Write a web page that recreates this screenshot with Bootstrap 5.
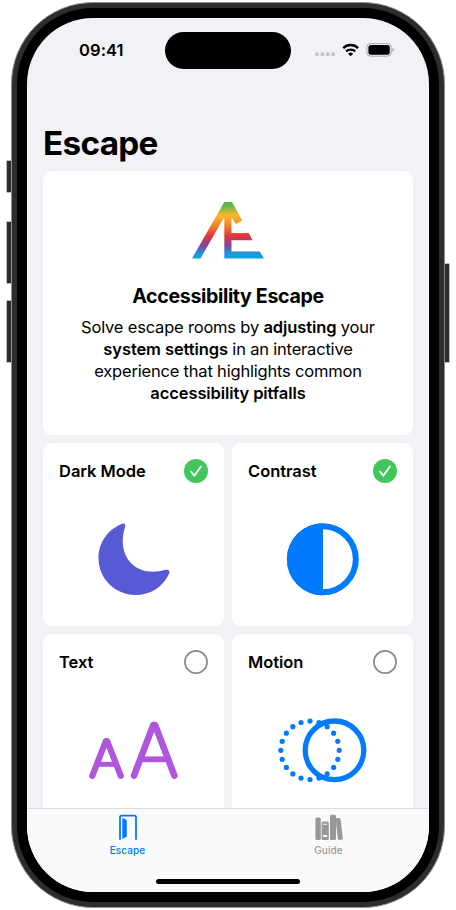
<!DOCTYPE html>
<html lang="en">
<head>
<meta charset="utf-8">
<meta name="viewport" content="width=device-width, initial-scale=1">
<title>Escape</title>
<link href="https://cdn.jsdelivr.net/npm/bootstrap@5.3.0/dist/css/bootstrap.min.css" rel="stylesheet">
<style>
body{font-family:Inter,"Liberation Sans",sans-serif;color:#000;background:#fff;width:456px;height:910px;overflow:hidden;-webkit-font-smoothing:antialiased}
.side-rail{width:11px;flex:none}
.side-key{width:4px;background:#2d2d2d;box-shadow:0 0 0 .5px #777}
.key-action{height:31px;margin-top:161px}
.key-up{height:61px;margin-top:30px}
.key-down{height:61px;margin-top:18px}
.key-power{height:98px;margin-top:264px}
.phone{width:434px;height:906px;margin-top:2px;flex:none;border:1px solid #909090;border-radius:82px;background:#2d2d2d;padding:5px}
.bezel{border-radius:76px;background:#000;padding:10px}
.screen{background:#f2f1f6;border-radius:66px;width:402px;height:874px}
.status{height:66px;padding:14px 0 0 0}
.clock{font-size:16.5px;font-weight:600;letter-spacing:.1px;width:138px;padding-left:52px;line-height:36px}
.island{width:126px;height:37px;flex:none}
.big-title{font-size:33.3px;font-weight:700;letter-spacing:-.7px;line-height:40px;margin:39px 0 8px}
.tile{border:0;border-radius:9px}
.hero{height:264px;padding-top:30px}
.hero h2{font-size:19.6px;font-weight:700;line-height:25px;letter-spacing:-.35px;margin:25px 0 7px}
.hero p{font-size:16.5px;line-height:22px;letter-spacing:-.19px}
.hero b{font-weight:600;letter-spacing:-.1px}
.room{height:183px;padding:16px}
.room h3{font-size:16.5px;font-weight:600;letter-spacing:-.03px;line-height:24px}
.room-art{margin-top:26px}
.tabs{height:84px;background:#f9fafb;border-top:1px solid #dcdce0;font-size:10px;font-weight:500;line-height:12px;letter-spacing:.1px;color:#999}
.tabs .on{color:#007aff}
.tab-item{width:201px;padding-top:4px}
.tab-item span{margin-top:1px}
.home{width:144px;height:5px}
</style>
<script src="https://cdn.jsdelivr.net/npm/bootstrap@5.3.0/dist/js/bootstrap.bundle.min.js"></script>
</head>
<body class="d-flex m-0">
<div class="side-rail d-flex flex-column align-items-end">
  <div class="side-key key-action"></div><div class="side-key key-up"></div><div class="side-key key-down"></div>
</div>
<div class="phone">
 <div class="bezel">
  <main class="screen overflow-hidden d-flex flex-column">
   <header class="status d-flex flex-shrink-0">
    <div class="clock">09:41</div>
    <div class="island bg-black rounded-pill"></div>
    <svg width="110" height="37" viewBox="291 32 110 37" aria-hidden="true">
      <g fill="#c4c3c9"><circle cx="317" cy="54.2" r="1.9"/><circle cx="322.4" cy="54.2" r="1.9"/><circle cx="327.7" cy="54.2" r="1.9"/><circle cx="333" cy="54.2" r="1.9"/></g>
      <g fill="none" stroke="#000" stroke-width="2.4"><path d="M343.2 48.1a10.6 10.6 0 0 1 14.9 0"/><path d="M346.1 51.4a6.6 6.6 0 0 1 9.1 0"/></g>
      <path d="M350.6 56.3l-2.5-2.6a3.7 3.7 0 0 1 5.1 0z"/>
      <rect x="366.9" y="43.6" width="24.4" height="12.6" rx="3.8" fill="none" stroke="#a9a8ad"/>
      <rect x="368.4" y="45.1" width="21.4" height="9.6" rx="2.5"/>
      <path d="M392.5 47.7q1.6.6 1.6 2.1t-1.6 2.1z" fill="#a9a8ad"/>
    </svg>
   </header>
   <section class="flex-grow-1 overflow-hidden px-3">
    <h1 class="big-title">Escape</h1>
    <article class="card tile hero text-center align-items-center mb-2">
      <svg width="74" height="58" viewBox="191 201 74 58" aria-hidden="true">
        <defs><linearGradient id="rainbow" gradientUnits="userSpaceOnUse" x1="0" y1="202" x2="0" y2="259"><stop offset=".06" stop-color="#5bb947"/><stop offset=".23" stop-color="#fdb52c"/><stop offset=".4" stop-color="#f6872a"/><stop offset=".6" stop-color="#df363d"/><stop offset=".76" stop-color="#87429a"/><stop offset=".92" stop-color="#12a0df"/></linearGradient></defs>
        <path fill="url(#rainbow)" d="M192 258.5L224.3 202H232L242.2 220.4L235.7 224L231.5 217V233H248.8L252.5 240.3H231.5V251.5H259.8L264 258.5H224.3V217L200.5 258.5Z"/>
      </svg>
      <h2>Accessibility Escape</h2>
      <p class="m-0">Solve escape rooms by <b>adjusting</b> your<br><b>system settings</b> in an interactive<br>experience that highlights common<br><b>accessibility pitfalls</b></p>
    </article>
    <div class="row row-cols-2 g-2">
     <div class="col"><article class="card tile room">
      <div class="d-flex justify-content-between"><h3 class="m-0">Dark Mode</h3>
       <svg width="24" height="24"><circle cx="12" cy="12" r="12" fill="#42c65b"/><path d="M7.2 12.7l3.1 4.1 6.6-9.2" fill="none" stroke="#fff" stroke-width="1.8" stroke-linecap="round" stroke-linejoin="round"/></svg></div>
      <svg class="room-art align-self-center" width="100" height="100"><path fill="#565ad4" d="M38 14.8C40.3 13.9 42 15.6 41.1 17.8C36.8 31 38.3 44 46 53C54 62.5 68 65 81.7 60.8C84.3 60.1 86.2 61.8 85.3 64.2C79.5 77.5 66.5 86 51.5 86C31 86 14.5 69.5 14.5 49C14.5 33.5 24 20.5 38 14.8Z"/></svg>
     </article></div>
     <div class="col"><article class="card tile room">
      <div class="d-flex justify-content-between"><h3 class="m-0">Contrast</h3>
       <svg width="24" height="24"><circle cx="12" cy="12" r="12" fill="#42c65b"/><path d="M7.2 12.7l3.1 4.1 6.6-9.2" fill="none" stroke="#fff" stroke-width="1.8" stroke-linecap="round" stroke-linejoin="round"/></svg></div>
      <svg class="room-art align-self-center" width="100" height="100"><circle cx="49.8" cy="50.3" r="33" fill="none" stroke="#007aff" stroke-width="6"/><path d="M50 14.3a36 36 0 0 0 0 72z" fill="#007aff"/></svg>
     </article></div>
     <div class="col"><article class="card tile room">
      <div class="d-flex justify-content-between"><h3 class="m-0">Text</h3>
       <svg width="24" height="24"><circle cx="12" cy="12" r="11.1" fill="none" stroke="#8a8a8e" stroke-width="1.7"/></svg></div>
      <svg class="room-art align-self-center" width="100" height="100"><g fill="none" stroke="#ae57dd" stroke-linejoin="round" stroke-linecap="round"><path stroke-width="6.2" d="M8.3 75.8L21.8 41.2H23.2L36.8 75.8"/><path stroke-width="5" stroke-linecap="butt" d="M13.5 64.3H32"/><path stroke-width="6.6" d="M50 75.6L69.3 25H71.1L90.4 75.6"/><path stroke-width="5.8" stroke-linecap="butt" d="M57 59.3H84"/></g></svg>
     </article></div>
     <div class="col"><article class="card tile room">
      <div class="d-flex justify-content-between"><h3 class="m-0">Motion</h3>
       <svg width="24" height="24"><circle cx="12" cy="12" r="11.1" fill="none" stroke="#8a8a8e" stroke-width="1.7"/></svg></div>
      <svg class="room-art align-self-center" width="100" height="100"><g fill="none" stroke="#007aff"><circle cx="37" cy="50.3" r="29.2" pathLength="20" stroke-width="5.2" stroke-linecap="round" stroke-dasharray="0 1"/><circle cx="61.5" cy="50.3" r="29.3" stroke-width="5.3"/></g></svg>
     </article></div>
    </div>
   </section>
   <nav class="tabs d-flex flex-column align-items-center flex-shrink-0">
    <div class="d-flex flex-grow-1">
     <div class="tab-item d-flex flex-column align-items-center on">
      <svg width="28" height="30" viewBox="0 0 28 30"><path d="M6 26.8V4.3Q6 2.6 7.6 2.6H20.4Q22 2.6 22 4.3V26.8" fill="none" stroke="#007aff" stroke-width="1.8"/><path d="M8.3 5.1L12.2 6.8Q12.8 7.1 12.8 7.8V22.8Q12.8 23.6 12.2 24L8.3 26Z" fill="#007aff"/></svg>
      <span>Escape</span></div>
     <div class="tab-item d-flex flex-column align-items-center">
      <svg width="28" height="30" viewBox="0 0 28 30"><g fill="#98989b" transform="translate(0 .5)"><rect x=".4" y="4" width="5.4" height="22.4" rx="1.5"/><path fill-rule="evenodd" d="M8 8H12.4Q13.8 8 13.8 9.5V24.9Q13.8 26.4 12.4 26.4H8Q6.6 26.4 6.6 24.9V9.5Q6.6 8 8 8ZM8.2 10.2V11.3H12.2V10.2ZM8.2 21.6V23.6H12.2V21.6Z"/><rect x="15" y="1.2" width="6" height="25.2" rx="1.5"/><path d="M20.5 4.8L24 4.4Q25.3 4.4 25.5 5.6L27.8 24.7Q27.9 25.9 26.8 26.1L24.2 26.4Q23 26.5 22.8 25.2Z"/></g></svg>
      <span>Guide</span></div>
    </div>
    <div class="home bg-black rounded-pill mb-2"></div>
   </nav>
  </main>
 </div>
</div>
<div class="side-rail"><div class="side-key key-power"></div></div>
</body>
</html>
